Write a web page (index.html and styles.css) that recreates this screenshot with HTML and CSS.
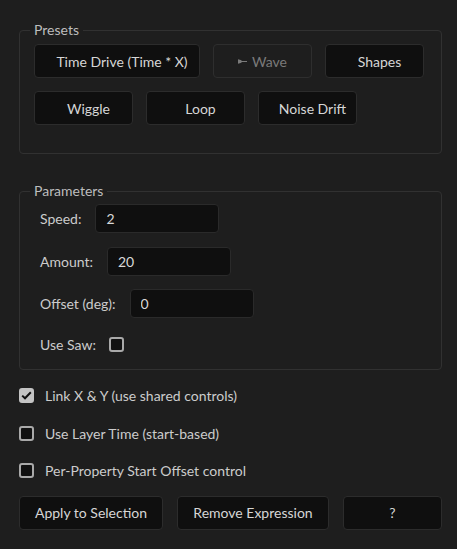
FILE: index.html
```html
<!DOCTYPE html>
<html>
<head>
<meta charset="utf-8">
<link rel="stylesheet" href="styles.css">
</head>
<body>
<div class="panel">
  <fieldset class="group presets">
    <legend>Presets</legend>
    <div class="btn-row">
      <button class="btn preset wide">Time Drive (Time * X)</button>
      <button class="btn preset disabled" disabled><svg class="wave-ico" width="9" height="5" viewBox="0 0 9 5"><path d="M0 0.3 L3.5 1.3 L3.5 3.7 L0 4.7 Z" fill="#7a7a7a"/><rect x="3" y="2" width="6" height="1" fill="#7a7a7a"/></svg>Wave</button>
      <button class="btn preset">Shapes</button>
    </div>
    <div class="btn-row">
      <button class="btn preset">Wiggle</button>
      <button class="btn preset">Loop</button>
      <button class="btn preset">Noise Drift</button>
    </div>
  </fieldset>

  <fieldset class="group params">
    <legend>Parameters</legend>
    <div class="param-row"><span class="lbl">Speed:</span><input class="field" type="text" value="2"></div>
    <div class="param-row"><span class="lbl">Amount:</span><input class="field" type="text" value="20"></div>
    <div class="param-row"><span class="lbl">Offset (deg):</span><input class="field" type="text" value="0"></div>
    <div class="param-row short"><span class="lbl">Use Saw:</span><span class="cb"></span></div>
  </fieldset>

  <div class="checks">
    <div class="check-row"><span class="cb checked"><svg width="11" height="9" viewBox="0 0 11 9"><path d="M1.2 4.6 L4 7.3 L9.8 1.3" fill="none" stroke="#111" stroke-width="2"/></svg></span><span class="check-lbl">Link X &amp; Y (use shared controls)</span></div>
    <div class="check-row"><span class="cb"></span><span class="check-lbl">Use Layer Time (start-based)</span></div>
    <div class="check-row"><span class="cb"></span><span class="check-lbl">Per-Property Start Offset control</span></div>
  </div>

  <div class="actions">
    <button class="btn action apply">Apply to Selection</button>
    <button class="btn action remove">Remove Expression</button>
    <button class="btn action help">?</button>
  </div>
</div>
</body>
</html>
```

FILE: styles.css
```css
html, body {
  margin: 0;
  padding: 0;
  background: #1e1e1e;
}
body {
  font-family: Lato, "Liberation Sans", sans-serif;
  font-size: 14px;
  color: #cccccc;
  width: 457px;
  height: 549px;
  overflow: hidden;
}
.panel {
  padding: 21px 15px 0 19px;
  display: flex;
  flex-direction: column;
}
.group {
  margin: 0;
  border: 1px solid #313131;
  border-radius: 4px;
  padding: 0 14px;
  min-width: 0;
}
.group legend {
  padding: 0 4px;
  margin-left: -4px;
  line-height: 18px;
  color: #bdbdbd;
  font-size: 14px;
}
.presets {
  padding-top: 5px;
  padding-bottom: 28px;
  display: flex;
  flex-direction: column;
  gap: 13px;
}
.btn-row {
  display: flex;
  gap: 13px;
}
.btn {
  font-family: inherit;
  font-size: 14px;
  color: #d6d6d6;
  background: #0f0f0f;
  border: 1px solid #2c2c2c;
  border-radius: 4px;
  height: 34px;
  display: flex;
  align-items: center;
  justify-content: center;
  box-sizing: border-box;
  margin: 0;
  padding: 0;
  white-space: nowrap;
  flex: none;
}
.preset {
  width: 99px;
  padding-left: 10px;
}
.preset.wide {
  width: 166px;
}
.preset.disabled {
  padding-left: 0;
  background: #1e1e1e;
  border-color: #2e2e2e;
  color: #7a7a7a;
}
.wave-ico {
  margin-right: 5px;
}
.params {
  margin-top: 28px;
  padding-top: 4px;
  padding-bottom: 11px;
  padding-left: 20px;
  display: flex;
  flex-direction: column;
  gap: 13.5px;
}
.params legend {
  margin-left: -10px;
}
.param-row {
  display: flex;
  align-items: center;
  gap: 14px;
  height: 29px;
}
.param-row.short {
  height: 26px;
  gap: 13px;
}
.field {
  width: 124px;
  height: 29px;
  box-sizing: border-box;
  background: #0f0f0f;
  border: 1px solid #2a2a2a;
  border-radius: 4px;
  color: #d8d8d8;
  font-family: inherit;
  font-size: 14px;
  padding: 0 10px;
  margin: 0;
  outline: none;
}
.cb {
  width: 15px;
  height: 15px;
  box-sizing: border-box;
  border: 2px solid #a9a9a9;
  border-radius: 3px;
  background: #111;
  display: flex;
  align-items: center;
  justify-content: center;
  flex: none;
}
.cb.checked {
  background: #c4c4c4;
  border-color: #c4c4c4;
}
.checks {
  display: flex;
  flex-direction: column;
  gap: 15.5px;
  margin-top: 15px;
}
.check-row {
  display: flex;
  align-items: center;
  gap: 11px;
  height: 22px;
}
.actions {
  display: flex;
  gap: 14px;
  margin-top: 14px;
}
.apply {
  width: 144px;
}
.remove {
  width: 152px;
}
.help {
  width: 99px;
}
```
